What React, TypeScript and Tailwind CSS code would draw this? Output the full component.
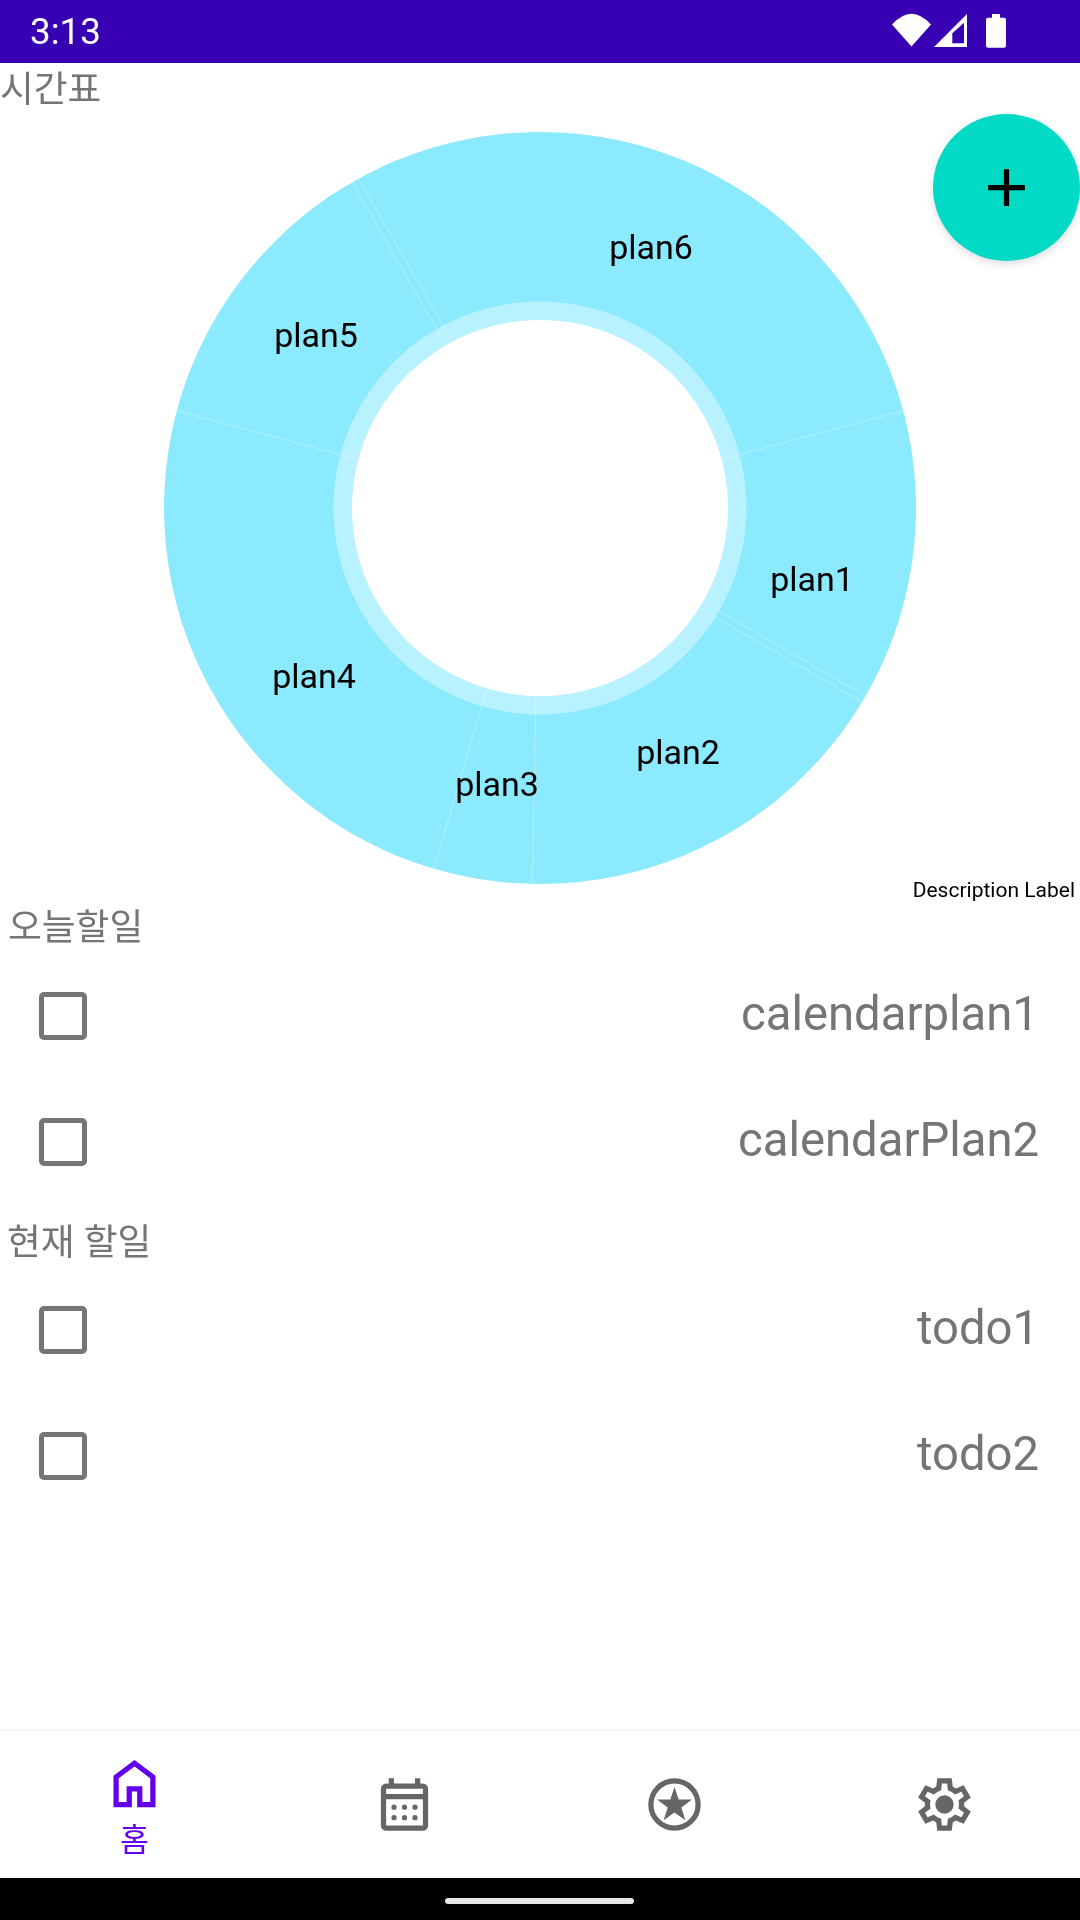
const FONT = "font-[Roboto,'Noto_Sans_CJK_KR',sans-serif]";

function polar(r: number, deg: number): [number, number] {
  const a = (deg * Math.PI) / 180;
  return [540 + r * Math.sin(a), 508 - r * Math.cos(a)];
}

const RADIALS = [75, 120, 181.2, 196.4, 285, 330];
const EXTRA: [number, number, number, number][] = [
  [699.3, 608, 862, 702],
  [452.5, 341.7, 358.5, 179],
];
const LABELS: [string, number, number][] = [
  ["plan6", 651, 259],
  ["plan5", 316, 347],
  ["plan1", 812, 591],
  ["plan2", 678, 764],
  ["plan3", 497, 796],
  ["plan4", 314, 688],
];

function Chart() {
  return (
    <svg viewBox="0 116 1080 785" className="block w-[1080px] h-[785px] shrink-0 will-change-transform">
      <circle cx="540" cy="508" r="376" fill="#8CEAFF" />
      {RADIALS.map((d) => {
        const [x1, y1] = polar(188, d);
        const [x2, y2] = polar(376, d);
        return <line key={d} x1={x1} y1={y1} x2={x2} y2={y2} stroke="#ffffff" strokeOpacity="0.3" strokeWidth="1" />;
      })}
      {EXTRA.map(([x1, y1, x2, y2]) => (
        <line key={x1} x1={x1} y1={y1} x2={x2} y2={y2} stroke="#ffffff" strokeOpacity="0.3" strokeWidth="1" />
      ))}
      <circle cx="540" cy="508" r="206.5" fill="#ffffff" fillOpacity="0.39" />
      <circle cx="540" cy="508" r="188" fill="#ffffff" />
      {LABELS.map(([t, x, y]) => (
        <text key={t} x={x} y={y} textAnchor="middle" className={`${FONT} text-[34px] fill-black`}>
          {t}
        </text>
      ))}
      <text x="1075" y="897" textAnchor="end" className={`${FONT} text-[21px] fill-black`}>
        Description Label
      </text>
    </svg>
  );
}

function Row({ label }: { label: string }) {
  return (
    <div className="h-[126px] flex items-center justify-between pl-[39px] pr-[41px]">
      <div className="w-[48px] h-[48px] -mt-[2px] border-[5.5px] border-[#757575] rounded-[5px]" />
      <span className="text-[47.25px] leading-[56px] text-[#757575] -mt-[6px] will-change-transform">{label}</span>
    </div>
  );
}

function Heading({ children, className = "" }: { children: string; className?: string }) {
  return (
    <div className={`h-[53px] leading-[53px] text-[36.75px] text-[#757575] will-change-transform ${className}`}>
      {children}
    </div>
  );
}

function NavIcon({ d, className }: { d: string; className: string }) {
  return (
    <svg viewBox="0 0 24 24" className={`w-[63px] h-[63px] ${className}`} fill="currentColor">
      <path d={d} />
    </svg>
  );
}

const HOME = "M6 19h3v-6h6v6h3v-9l-6-4.5L6 10v9zm-2 2V9l8-6 8 6v12h-7v-6h-2v6H4z";
const CALENDAR =
  "M5 22q-.825 0-1.413-.588T3 20V6q0-.825.587-1.413T5 4h1V2h2v2h8V2h2v2h1q.825 0 1.413.587T21 6v14q0 .825-.587 1.413T19 22H5zm0-2h14V10H5v10zM5 8h14V6H5v2zm7 6a1 1 0 1 1 0-2 1 1 0 0 1 0 2zm-4 0a1 1 0 1 1 0-2 1 1 0 0 1 0 2zm8 0a1 1 0 1 1 0-2 1 1 0 0 1 0 2zm-4 4a1 1 0 1 1 0-2 1 1 0 0 1 0 2zm-4 0a1 1 0 1 1 0-2 1 1 0 0 1 0 2zm8 0a1 1 0 1 1 0-2 1 1 0 0 1 0 2z";
const GEAR =
  "m9.25 22-.4-3.2q-.325-.125-.612-.3-.288-.175-.563-.375L4.7 19.375l-2.75-4.75 2.575-1.95Q4.5 12.5 4.5 12.337v-.675q0-.163.025-.338L1.95 9.375l2.75-4.75 2.975 1.25q.275-.2.575-.375.3-.175.6-.3l.4-3.2h5.5l.4 3.2q.325.125.613.3.287.175.562.375l2.975-1.25 2.75 4.75-2.575 1.95q.025.175.025.338v.674q0 .163-.05.338l2.575 1.95-2.75 4.75-2.95-1.25q-.275.2-.575.375-.3.175-.6.3l-.4 3.2Zm1.75-2h1.975l.35-2.65q.775-.2 1.438-.587.662-.388 1.212-.938l2.475 1.025.975-1.7-2.15-1.625q.125-.35.175-.738.05-.387.05-.787t-.05-.788q-.05-.387-.175-.737l2.15-1.625-.975-1.7-2.475 1.05q-.55-.575-1.212-.963-.663-.387-1.438-.587L13 4h-1.975l-.35 2.65q-.775.2-1.437.587-.663.388-1.213.938L5.55 7.15l-.975 1.7 2.15 1.6q-.125.375-.175.75-.05.375-.05.8 0 .4.05.775t.175.75l-2.15 1.625.975 1.7 2.475-1.05q.55.575 1.213.962.662.388 1.437.588ZM12 15.5a3.5 3.5 0 1 0 0-7 3.5 3.5 0 0 0 0 7Z";

export default function App() {
  return (
    <div className={`relative w-[1080px] h-[1920px] bg-white flex flex-col overflow-hidden ${FONT}`}>
      <div className="h-[63px] shrink-0 bg-[#3700B3] flex items-center justify-between pl-[30px]">
        <span className="text-[36.75px] leading-[43px] text-white will-change-transform">3:13</span>
        <svg viewBox="880 0 200 63" className="w-[200px] h-[63px]" fill="#ffffff">
          <path d="M892 24.5 Q911.5 3 931 24.5 L911.5 46.5 Z" />
          <path
            fillRule="evenodd"
            d="M967 14 V47 H934 Z M964 22.7 L952.3 33.3 V43.3 H964 Z"
          />
          <path d="M992 14 H1000 V17.7 H1004 Q1006 17.7 1006 19.7 V45.7 Q1006 47.7 1004 47.7 H988 Q986 47.7 986 45.7 V19.7 Q986 17.7 988 17.7 H992 Z" />
        </svg>
      </div>

      <Heading>시간표</Heading>
      <Chart />

      <Heading className="pl-[8px]">오늘할일</Heading>
      <Row label="calendarplan1" />
      <Row label="calendarPlan2" />

      <Heading className="pl-[7px] pt-[1px] mt-[9px]">현재 할일</Heading>
      <Row label="todo1" />
      <Row label="todo2" />

      <div className="flex-1" />

      <div className="h-[147px] shrink-0 flex bg-white shadow-[0_-1px_3px_rgba(0,0,0,0.08)]">
        <div className="flex-1 flex flex-col items-center pt-[21px] pr-[1px]">
          <NavIcon d={HOME} className="text-[#6200EE]" />
          <span className="mt-[10px] text-[31.5px] leading-[32px] text-[#6200EE] will-change-transform">홈</span>
        </div>
        <div className="flex-1 flex flex-col items-center pt-[42px] pr-[1px]">
          <NavIcon d={CALENDAR} className="text-[#666666]" />
        </div>
        <div className="flex-1 flex flex-col items-center pt-[42px] pr-[1px]">
          <svg viewBox="0 0 24 24" className="w-[63px] h-[63px] text-[#666666]" fill="currentColor">
            <circle cx="12" cy="12" r="9" fill="none" stroke="currentColor" strokeWidth="2" />
            <polygon points="12,5.3 13.6,10.1 18.66,10.14 14.6,13.16 16.12,18 12,15.06 7.88,18 9.4,13.16 5.34,10.14 10.4,10.1" />
          </svg>
        </div>
        <div className="flex-1 flex flex-col items-center pt-[42px] pr-[1px]">
          <NavIcon d={GEAR} className="text-[#666666]" />
        </div>
      </div>

      <div className="h-[42px] shrink-0 bg-black flex justify-center pt-[20px] pr-[2px]">
        <div className="w-[189px] h-[6px] rounded-full bg-[#e5e5e5]" />
      </div>

      <div className="absolute left-[880px] top-[114px] w-[200px] h-[200px] overflow-hidden">
        <div className="ml-[53px] w-[147px] h-[147px] rounded-full bg-[#03DAC5] shadow-[0_3px_9px_rgba(0,0,0,0.14)] flex items-center justify-center">
          <svg viewBox="0 0 24 24" className="w-[63px] h-[63px]" fill="#000000">
            <path d="M19 13h-6v6h-2v-6H5v-2h6V5h2v6h6v2z" />
          </svg>
        </div>
      </div>
    </div>
  );
}
